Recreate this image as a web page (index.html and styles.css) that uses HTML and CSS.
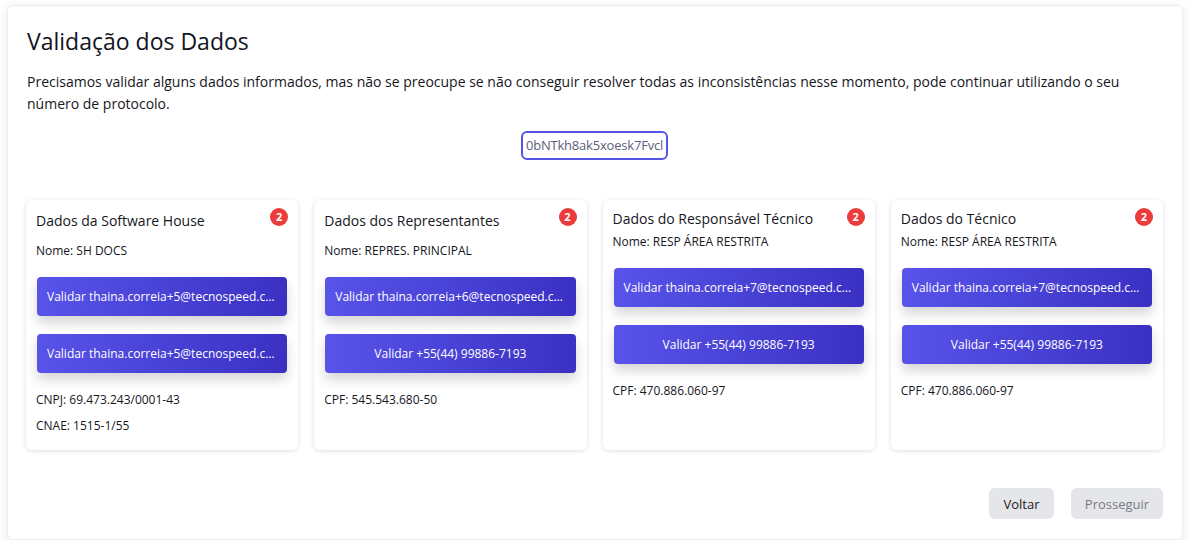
FILE: index.html
```html
<!DOCTYPE html>
<html lang="pt-BR">

<head>
    <meta charset="UTF-8">
    <meta name="viewport" content="width=device-width, initial-scale=1.0">
    <title>Validação dos Dados</title>
    <link rel="stylesheet" href="styles.css">
</head>

<body>
    <div class="panel">
        <h1 class="title">Validação dos Dados</h1>
        <p class="intro">Precisamos validar alguns dados informados, mas não se preocupe se não conseguir resolver todas as inconsistências nesse momento, pode continuar utilizando o seu número de protocolo.</p>

        <div class="protocol-row">
            <span class="protocol">0bNTkh8ak5xoesk7Fvcl</span>
        </div>

        <div class="cards">
            <div class="card">
                <span class="badge">2</span>
                <h3 class="card-title">Dados da Software House</h3>
                <p class="card-line">Nome: SH DOCS</p>
                <div class="actions">
                    <button class="btn-validate">Validar thaina.correia+5@tecnospeed.com.br</button>
                    <button class="btn-validate">Validar thaina.correia+5@tecnospeed.com.br</button>
                </div>
                <p class="card-line">CNPJ: 69.473.243/0001-43</p>
                <p class="card-line">CNAE: 1515-1/55</p>
            </div>

            <div class="card">
                <span class="badge">2</span>
                <h3 class="card-title">Dados dos Representantes</h3>
                <p class="card-line">Nome: REPRES. PRINCIPAL</p>
                <div class="actions">
                    <button class="btn-validate">Validar thaina.correia+6@tecnospeed.com.br</button>
                    <button class="btn-validate">Validar +55(44) 99886-7193</button>
                </div>
                <p class="card-line">CPF: 545.543.680-50</p>
            </div>

            <div class="card compact">
                <span class="badge">2</span>
                <h3 class="card-title">Dados do Responsável Técnico</h3>
                <p class="card-line">Nome: RESP ÁREA RESTRITA</p>
                <div class="actions">
                    <button class="btn-validate">Validar thaina.correia+7@tecnospeed.com.br</button>
                    <button class="btn-validate">Validar +55(44) 99886-7193</button>
                </div>
                <p class="card-line">CPF: 470.886.060-97</p>
            </div>

            <div class="card compact">
                <span class="badge">2</span>
                <h3 class="card-title">Dados do Técnico</h3>
                <p class="card-line">Nome: RESP ÁREA RESTRITA</p>
                <div class="actions">
                    <button class="btn-validate">Validar thaina.correia+7@tecnospeed.com.br</button>
                    <button class="btn-validate">Validar +55(44) 99886-7193</button>
                </div>
                <p class="card-line">CPF: 470.886.060-97</p>
            </div>
        </div>

        <div class="footer">
            <button class="btn-back">Voltar</button>
            <button class="btn-next" disabled>Prosseguir</button>
        </div>
    </div>
</body>

</html>
```

FILE: styles.css
```css
* {
    box-sizing: border-box;
}

body {
    margin: 0;
    padding: 5px 13px 0 7px;
    background: #fff;
    font-family: "Open Sans", "Liberation Sans", sans-serif;
    color: #16161d;
}

.panel {
    border: 1px solid #ececec;
    border-radius: 6px;
    box-shadow: 0 2px 10px rgba(0, 0, 0, 0.1);
    padding: 20px 19px 20px 18px;
}

.title {
    margin: 0 0 15px 1px;
    font-size: 23px;
    line-height: 30px;
    font-weight: 400;
    color: #14141c;
}

.intro {
    margin: 0 0 0 1px;
    font-size: 14px;
    line-height: 22px;
}

.protocol-row {
    display: flex;
    justify-content: center;
    margin-top: 16px;
}

.protocol {
    border: 2px solid #5753e6;
    border-radius: 6px;
    height: 29px;
    padding: 0 3px;
    font-size: 13px;
    line-height: 25px;
    color: #5e5e7c;
    letter-spacing: -0.2px;
}

.cards {
    display: grid;
    grid-template-columns: repeat(4, minmax(0, 1fr));
    gap: 16px;
    margin-top: 40px;
}

.card {
    position: relative;
    min-width: 0;
    background: #fff;
    border-radius: 6px;
    box-shadow: 0 1px 5px rgba(0, 0, 0, 0.13);
    padding: 11px 11px 16px 10px;
}

.badge {
    position: absolute;
    top: 8px;
    right: 10px;
    width: 18px;
    height: 18px;
    border-radius: 50%;
    background: #ec3b3b;
    color: #fff;
    font-size: 11px;
    font-weight: 700;
    line-height: 18px;
    text-align: center;
}

.card-title {
    margin: 0 0 12px 0;
    font-size: 14px;
    line-height: 20px;
    font-weight: 400;
}

.card-line {
    margin: 0 0 10px 0;
    font-size: 12px;
    line-height: 16px;
}

.card-line:last-child {
    margin-bottom: 0;
}

.card-title + .card-line {
    margin-bottom: 18px;
}

.compact {
    padding-top: 9px;
}

.compact .card-title {
    margin-bottom: 5px;
}

.actions {
    display: flex;
    flex-direction: column;
    gap: 18px;
    margin-bottom: 19px;
    padding-left: 1px;
}

.btn-validate {
    min-width: 0;
    height: 39px;
    border: 0;
    border-radius: 4px;
    background: linear-gradient(to right, #5853e9, #3a31c3);
    box-shadow: 0 7px 12px rgba(0, 0, 0, 0.16);
    color: #fff;
    font-family: inherit;
    font-size: 12px;
    padding: 0 10px;
    white-space: nowrap;
    overflow: hidden;
    text-overflow: ellipsis;
}

.footer {
    display: flex;
    justify-content: flex-end;
    gap: 17px;
    margin-top: 38px;
}

.footer button {
    height: 31px;
    border: 0;
    border-radius: 6px;
    background: #e5e6ea;
    font-family: inherit;
    font-size: 13px;
}

.btn-back {
    width: 65px;
    color: #1c1c24;
}

.btn-next {
    width: 92px;
    color: #7a7a86;
}
```
